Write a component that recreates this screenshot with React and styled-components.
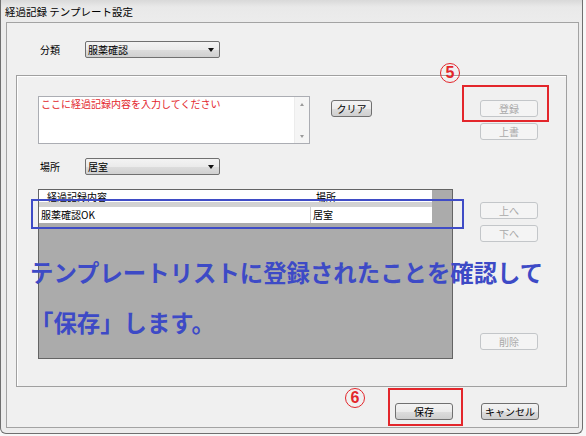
import React from 'react';
import styled, { createGlobalStyle } from 'styled-components';

const GlobalStyle = createGlobalStyle`
  html, body {
    margin: 0;
    padding: 0;
    background: #f7f7f7;
  }
  body {
    font-family: 'Noto Sans CJK JP', 'Noto Sans', sans-serif;
    font-size: 10px;
    color: #000;
  }
`;

const Stage = styled.div`
  position: relative;
  width: 586px;
  height: 436px;
  overflow: hidden;
`;

const Window = styled.div`
  width: 583px;
  height: 434px;
  box-sizing: border-box;
  border: 1px solid #6f6f6f;
  border-top: none;
  border-radius: 0 0 6px 6px;
  background: #ececec;
  display: flex;
  flex-direction: column;
`;

const TitleBar = styled.div`
  height: 22px;
  flex: none;
  padding-left: 4px;
  line-height: 23px;
  font-size: 10.5px;
  background: linear-gradient(to bottom, #d9d9d9 0, #e9e9e9 7px, #ececec 100%);
`;

const Client = styled.div`
  flex: 1;
  margin: 0 3px 5px 5px;
  border: 1px solid #a3a3a3;
  background: #f0f0f0;
  display: flex;
  flex-direction: column;
`;

const FieldRow = styled.div`
  display: flex;
  align-items: center;
  padding-left: ${(p) => p.$indent}px;
  margin-top: ${(p) => p.$mt}px;
`;

const Label = styled.span`
  width: 45px;
  line-height: 17px;
`;

const Combo = styled.div`
  position: relative;
  width: 135px;
  height: 17px;
  box-sizing: border-box;
  border: 1px solid #707070;
  border-radius: 2px;
  padding-left: 2px;
  line-height: 15px;
  background: linear-gradient(to bottom, #f3f3f3 0%, #ebebeb 50%, #dddddd 51%, #d0d0d0 100%);
  &::after {
    content: '';
    position: absolute;
    right: 5px;
    top: 6px;
    border-left: 3.5px solid transparent;
    border-right: 3.5px solid transparent;
    border-top: 4px solid #111;
  }
`;

const Panel = styled.div`
  margin: 17px 0 0 9px;
  width: 551px;
  height: 312px;
  box-sizing: border-box;
  border: 1px solid #a0a0a0;
  box-shadow: inset 1px 1px 0 #ffffff;
  padding: 20px 0 0 21px;
  display: flex;
`;

const LeftCol = styled.div`
  width: 442px;
  display: flex;
  flex-direction: column;
`;

const RightCol = styled.div`
  width: 58px;
  display: flex;
  flex-direction: column;
`;

const InputRow = styled.div`
  display: flex;
  align-items: flex-start;
`;

const Memo = styled.div`
  width: 272px;
  height: 48px;
  box-sizing: border-box;
  border: 1px solid #abadb3;
  background: #fff;
  display: flex;
`;

const MemoText = styled.div`
  flex: 1;
  padding: 0 2px;
  line-height: 13px;
  color: #e3262b;
`;

const ScrollTrack = styled.div`
  width: 14px;
  background: #f5f5f5;
  border-left: 1px solid #ececec;
  display: flex;
  flex-direction: column;
  justify-content: space-between;
  padding: 6px 0 5px;
`;

const Arrow = styled.span`
  align-self: center;
  width: 0;
  height: 0;
  border-left: 2.5px solid transparent;
  border-right: 2.5px solid transparent;
  ${(p) => (p.$dir === 'up' ? 'border-bottom: 3px solid #9a9a9a;' : 'border-top: 3px solid #9a9a9a;')}
`;

const Button = styled.div`
  width: ${(p) => p.$w || 58}px;
  height: 17px;
  box-sizing: border-box;
  margin-top: ${(p) => p.$mt || 0}px;
  margin-left: ${(p) => p.$ml || 0}px;
  border: 1px solid ${(p) => (p.$disabled ? '#c3c6c9' : '#707070')};
  border-radius: 3px;
  display: flex;
  align-items: center;
  justify-content: center;
  color: ${(p) => (p.$disabled ? '#a9a9a9' : '#000')};
  background: ${(p) =>
    p.$disabled
      ? '#f4f4f4'
      : 'linear-gradient(to bottom, #f3f3f3 0%, #ebebeb 50%, #dddddd 51%, #cfcfcf 100%)'};
  flex: none;
`;

const List = styled.div`
  margin-top: 14px;
  width: 415px;
  height: 170px;
  box-sizing: border-box;
  border: 1px solid #646464;
  background: #ababab;
`;

const ListLine = styled.div`
  width: 393px;
  height: ${(p) => p.$h}px;
  background: #fff;
  display: flex;
  overflow: hidden;
`;

const HeaderGap = styled.div`
  width: 393px;
  height: 5px;
  background: #d2d2d2;
`;

const Cell = styled.div`
  width: ${(p) => p.$w}px;
  box-sizing: border-box;
  padding-left: ${(p) => p.$pad}px;
  line-height: ${(p) => p.$lh}px;
  white-space: nowrap;
  border-right: ${(p) => (p.$divider ? '1px solid #cfcfcf' : 'none')};
`;

const ButtonBar = styled.div`
  margin-top: 16px;
  padding-right: 39px;
  display: flex;
  justify-content: flex-end;
  gap: 28px;
`;

const RedBox = styled.div`
  position: absolute;
  left: ${(p) => p.$x}px;
  top: ${(p) => p.$y}px;
  width: ${(p) => p.$w}px;
  height: ${(p) => p.$h}px;
  box-sizing: border-box;
  border: 2px solid #e3262b;
`;

const BlueBox = styled.div`
  position: absolute;
  left: 31px;
  top: 199px;
  width: 433px;
  height: 30px;
  box-sizing: border-box;
  border: 2px solid #3f4cc6;
`;

const StepMark = styled.div`
  position: absolute;
  left: ${(p) => p.$x}px;
  top: ${(p) => p.$y}px;
  width: 20px;
  height: 20px;
  box-sizing: border-box;
  border: 1.5px solid #e3262b;
  border-radius: 50%;
  color: #e3262b;
  font-family: 'Liberation Sans', Arial, sans-serif;
  font-weight: 700;
  font-size: 16px;
  line-height: 17px;
  text-align: center;
`;

const Note = styled.div`
  position: absolute;
  left: 30px;
  top: 247px;
  font-size: 23.4px;
  font-weight: 700;
  line-height: 50px;
  color: #3d4ac6;
  white-space: nowrap;
`;

export default function App() {
  return (
    <Stage>
      <GlobalStyle />
      <Window>
        <TitleBar>経過記録 テンプレート設定</TitleBar>
        <Client>
          <FieldRow $indent={33} $mt={18}>
            <Label>分類</Label>
            <Combo>服薬確認</Combo>
          </FieldRow>
          <Panel>
            <LeftCol>
              <InputRow>
                <Memo>
                  <MemoText>ここに経過記録内容を入力してください</MemoText>
                  <ScrollTrack>
                    <Arrow $dir="up" />
                    <Arrow $dir="down" />
                  </ScrollTrack>
                </Memo>
                <Button $w={41} $ml={21} $mt={4}>クリア</Button>
              </InputRow>
              <FieldRow $indent={2} $mt={14}>
                <Label>場所</Label>
                <Combo>居室</Combo>
              </FieldRow>
              <List>
                <ListLine $h={12}>
                  <Cell $w={272} $pad={8} $lh={13}>経過記録内容</Cell>
                  <Cell $w={121} $pad={5} $lh={13}>場所</Cell>
                </ListLine>
                <HeaderGap />
                <ListLine $h={16}>
                  <Cell $w={272} $pad={2} $lh={16} $divider>服薬確認OK</Cell>
                  <Cell $w={121} $pad={2} $lh={16}>居室</Cell>
                </ListLine>
              </List>
            </LeftCol>
            <RightCol>
              <Button $disabled $mt={4}>登録</Button>
              <Button $disabled $mt={6}>上書</Button>
              <Button $disabled $mt={62}>上へ</Button>
              <Button $disabled $mt={6}>下へ</Button>
              <Button $disabled $mt={91}>削除</Button>
            </RightCol>
          </Panel>
          <ButtonBar>
            <Button>保存</Button>
            <Button>キャンセル</Button>
          </ButtonBar>
        </Client>
      </Window>

      <StepMark $x={440} $y={63}>5</StepMark>
      <RedBox $x={462} $y={85} $w={87} $h={37} />
      <BlueBox />
      <Note>
        テンプレートリストに登録されたことを確認して
        <br />
        「保存」します。
      </Note>
      <StepMark $x={345} $y={388}>6</StepMark>
      <RedBox $x={388} $y={388} $w={75} $h={38} />
    </Stage>
  );
}
